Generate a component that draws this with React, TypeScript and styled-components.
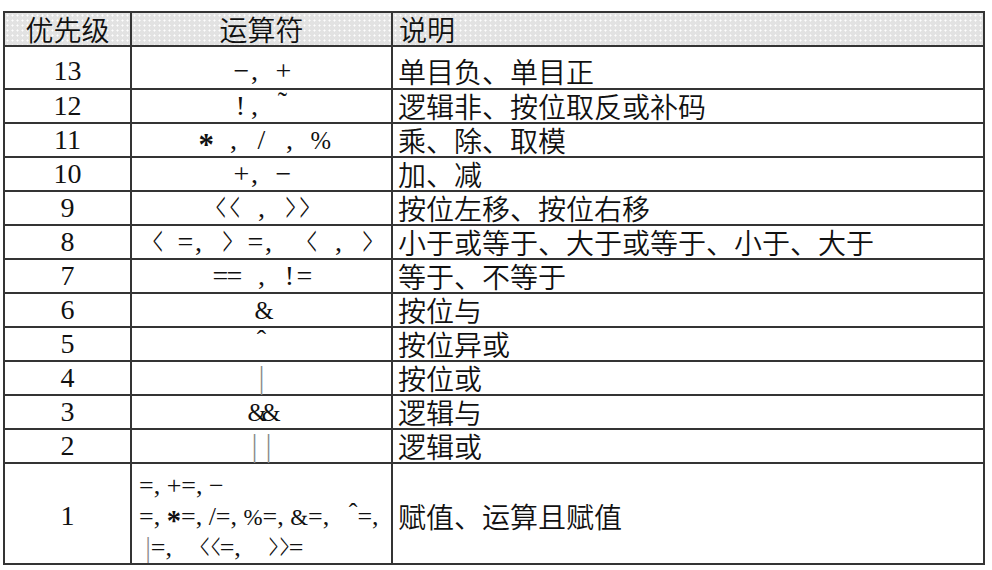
import React from 'react';
import styled, { createGlobalStyle } from 'styled-components';

const Global = createGlobalStyle`
  html, body { margin: 0; padding: 0; background: #ffffff; }
  body {
    font-family: "Liberation Serif", "Noto Sans CJK SC", serif;
    color: #111111;
  }
`;

const Page = styled.div`
  padding: 11px 0 0 3px;
`;

const Table = styled.table`
  border-collapse: collapse;
  table-layout: fixed;
  width: 980px;
  font-size: 28px;
`;

const Col = styled.col<{ $w: number }>`
  width: ${(p) => p.$w}px;
`;

const Row = styled.tr<{ $h: number; $pad?: number }>`
  height: ${(p) => p.$h}px;
  & > td {
    padding-top: ${(p) => p.$pad ?? 0}px;
  }
`;

const HeadCell = styled.th<{ $left?: boolean }>`
  border: 2px solid #343434;
  background-color: #e2e2e2;
  background-image: radial-gradient(circle, rgba(255, 255, 255, 0.95) 0.8px, transparent 1.3px);
  background-size: 5px 5px;
  font-family: "Noto Sans CJK SC", sans-serif;
  font-weight: 350;
  font-size: 28px;
  line-height: 30px;
  color: #111111;
  text-align: ${(p) => (p.$left ? 'left' : 'center')};
  padding: 0 0 0 ${(p) => (p.$left ? 6 : 0)}px;
  vertical-align: middle;
`;

const BaseCell = styled.td`
  border: 2px solid #343434;
  padding: 0;
  line-height: 30px;
  vertical-align: middle;
  white-space: pre;
`;

const NumCell = styled(BaseCell)`
  text-align: center;
  font-family: "Liberation Serif", serif;
  font-size: 28px;
`;

const OpCell = styled(BaseCell)<{ $multi?: boolean }>`
  text-align: ${(p) => (p.$multi ? 'left' : 'center')};
  padding-left: ${(p) => (p.$multi ? 7 : 0)}px;
  font-family: "Liberation Serif", serif;
  font-size: ${(p) => (p.$multi ? 26 : 28)}px;
  line-height: ${(p) => (p.$multi ? 31 : 30)}px;
`;

const OpLine = styled.div`
  white-space: pre;
  height: 31px;
`;

const DescCell = styled(BaseCell)`
  text-align: left;
  padding-left: 5px;
  font-family: "Noto Sans CJK SC", sans-serif;
  font-weight: 350;
  font-size: 28px;
`;

type Kind = 'chev' | 'bar' | 'star' | 'hi' | 'small' | 'plain';

const kindOf = (c: string): Kind => {
  if (c === '<' || c === '>') return 'chev';
  if (c === '|') return 'bar';
  if (c === '*') return 'star';
  if (c === 'ˆ' || c === '˜') return 'hi';
  if (c === '&' || c === '%') return 'small';
  return 'plain';
};

const Glyph = styled.span<{ $k: Kind; $mono: boolean }>`
  display: inline-block;
  line-height: 18px;
  text-align: center;
  width: ${(p) => (p.$mono ? '14px' : p.$k === 'chev' ? '0.42em' : 'auto')};
  font-size: ${(p) => (p.$k === 'small' ? '0.88em' : p.$k === 'star' ? '1.1em' : '1em')};
  color: ${(p) => (p.$k === 'bar' ? '#8a8a8a' : 'inherit')};
  font-weight: ${(p) => (p.$k === 'star' ? 700 : 400)};
  vertical-align: ${(p) =>
    p.$k === 'star' ? '-0.2em' : p.$k === 'hi' ? '0.14em' : 'baseline'};
  transform: ${(p) =>
    p.$k === 'chev' ? 'scale(0.62, 1.55)' : p.$k === 'bar' ? 'scaleY(1.15)' : 'none'};
`;

function renderOps(text: string, mono: boolean) {
  const out: React.ReactNode[] = [];
  let buf = '';
  Array.from(text).forEach((c, i) => {
    const k = kindOf(c);
    if (!mono && k === 'plain') {
      buf += c;
      return;
    }
    if (buf) {
      out.push(buf);
      buf = '';
    }
    out.push(
      <Glyph key={i} $k={k} $mono={mono}>
        {c}
      </Glyph>
    );
  });
  if (buf) out.push(buf);
  return out;
}

type RowData = { p: string; op: string; d: string; h?: number; pad?: number };

const rows: RowData[] = [
  { p: '13', op: '−, +', d: '单目负、单目正', h: 43, pad: 6 },
  { p: '12', op: '!, ˜', d: '逻辑非、按位取反或补码' },
  { p: '11', op: '* , / , %', d: '乘、除、取模' },
  { p: '10', op: '+, −', d: '加、减' },
  { p: '9', op: '<< , >>', d: '按位左移、按位右移' },
  { p: '8', op: '< =, > =,  < , >', d: '小于或等于、大于或等于、小于、大于' },
  { p: '7', op: '== , !=', d: '等于、不等于' },
  { p: '6', op: '&', d: '按位与' },
  { p: '5', op: 'ˆ', d: '按位异或' },
  { p: '4', op: '|', d: '按位或' },
  { p: '3', op: '&&', d: '逻辑与' },
  { p: '2', op: '||', d: '逻辑或' },
];

const assignLines = ['=, +=, −', '=, *=, /=, %=, &=,   ˆ=,', ' |=,    <<=,    >>='];

export default function App() {
  return (
    <Page>
      <Global />
      <Table>
        <colgroup>
          <Col $w={127} />
          <Col $w={261} />
          <Col $w={592} />
        </colgroup>
        <thead>
          <Row $h={34}>
            <HeadCell>优先级</HeadCell>
            <HeadCell>运算符</HeadCell>
            <HeadCell $left>说明</HeadCell>
          </Row>
        </thead>
        <tbody>
          {rows.map((r) => (
            <Row key={r.p} $h={r.h ?? 34} $pad={r.pad}>
              <NumCell>{r.p}</NumCell>
              <OpCell>{renderOps(r.op, true)}</OpCell>
              <DescCell>{r.d}</DescCell>
            </Row>
          ))}
          <Row $h={101} $pad={5}>
            <NumCell>1</NumCell>
            <OpCell $multi>
              {assignLines.map((l, i) => (
                <OpLine key={i}>{renderOps(l, false)}</OpLine>
              ))}
            </OpCell>
            <DescCell>赋值、运算且赋值</DescCell>
          </Row>
        </tbody>
      </Table>
    </Page>
  );
}
